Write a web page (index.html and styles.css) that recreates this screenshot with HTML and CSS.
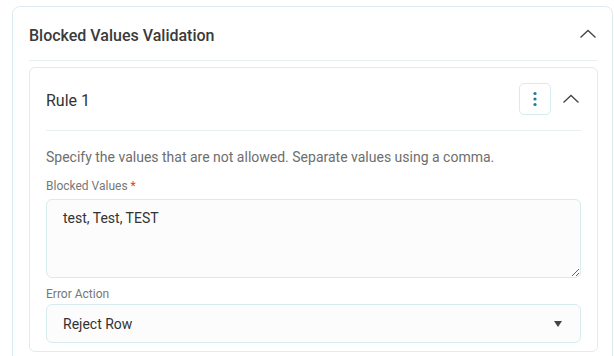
FILE: index.html
```html
<!DOCTYPE html>
<html lang="en">
<head>
    <meta charset="UTF-8">
    <meta name="viewport" content="width=device-width, initial-scale=1.0">
    <title>Blocked Values Validation</title>
    <link rel="stylesheet" href="styles.css">
</head>
<body>
    <div class="page">
        <div class="panel">
            <div class="panel-header">
                <h2>Blocked Values Validation</h2>
                <button class="chevron-btn" aria-label="Collapse">
                    <svg width="18" height="10" viewBox="0 0 18 10"><path d="M1.5 8.5 L9 1.5 L16.5 8.5" fill="none" stroke="#444" stroke-width="1.3"/></svg>
                </button>
            </div>
            <div class="rule-card">
                <div class="rule-header">
                    <h3>Rule 1</h3>
                    <div class="rule-actions">
                        <button class="kebab-btn" aria-label="More">
                            <svg width="4" height="16" viewBox="0 0 4 16"><circle cx="2" cy="2.5" r="1.6" fill="#1c7c99"/><circle cx="2" cy="8" r="1.6" fill="#1c7c99"/><circle cx="2" cy="13.5" r="1.6" fill="#1c7c99"/></svg>
                        </button>
                        <button class="chevron-btn" aria-label="Collapse rule">
                            <svg width="18" height="10" viewBox="0 0 18 10"><path d="M1.5 8.5 L9 1.5 L16.5 8.5" fill="none" stroke="#444" stroke-width="1.3"/></svg>
                        </button>
                    </div>
                </div>
                <div class="rule-body">
                    <p class="hint">Specify the values that are not allowed. Separate values using a comma.</p>
                    <div class="form-group">
                        <label for="blocked">Blocked Values <span class="req">*</span></label>
                        <textarea id="blocked">test, Test, TEST</textarea>
                    </div>
                    <div class="form-group">
                        <label for="action" class="label-tight">Error Action</label>
                        <div class="select-wrap">
                            <select id="action">
                                <option>Reject Row</option>
                                <option>Warn</option>
                            </select>
                        </div>
                    </div>
                </div>
            </div>
        </div>
    </div>
</body>
</html>
```

FILE: styles.css
```css
body {
    margin: 0;
    font-family: Roboto, "Liberation Sans", Arial, sans-serif;
    color: #333;
    background: #fff;
}
.page {
    height: 356px;
    box-sizing: border-box;
    overflow: hidden;
    padding: 6px 0 0 12px;
}
.panel {
    border: 1px solid #dcedef;
    border-radius: 8px;
    padding: 0 14px 0 16px;
    margin-right: 1px;
    height: 380px;
}
.panel-header {
    display: flex;
    align-items: center;
    justify-content: space-between;
    height: 53px;
    border-bottom: 1px solid #e6f1f2;
}
.panel-header h2 {
    margin: 4px 0 0;
    font-size: 16px;
    font-weight: 500;
    color: #3a3a3a;
}
.chevron-btn {
    background: none;
    border: none;
    padding: 0;
    width: 20px;
    height: 20px;
    display: flex;
    align-items: center;
    justify-content: center;
    cursor: pointer;
}
.rule-card {
    margin-top: 6px;
    border: 1px solid #dcedef;
    border-radius: 6px;
    padding: 0 16px 8px 16px;
}
.rule-header {
    display: flex;
    align-items: center;
    justify-content: space-between;
    height: 62px;
    border-bottom: 1px solid #e6f1f2;
}
.rule-header h3 {
    margin: 3px 0 0;
    font-size: 16px;
    font-weight: 400;
    color: #333;
}
.rule-actions {
    display: flex;
    align-items: center;
    gap: 10px;
}
.kebab-btn {
    width: 32px;
    height: 32px;
    border: 1px solid #d6ecef;
    border-radius: 5px;
    background: #fff;
    display: flex;
    align-items: center;
    justify-content: center;
    padding: 0;
    cursor: pointer;
}
.rule-body {
    padding-top: 16px;
}
.hint {
    margin: 0 0 12px;
    font-size: 14px;
    line-height: 20px;
    color: #6e6e6e;
}
.form-group {
    margin-bottom: 9px;
}
.form-group:last-child {
    margin-bottom: 0;
}
label {
    display: block;
    font-size: 12px;
    line-height: 14px;
    color: #777;
    margin-bottom: 6px;
}
.label-tight {
    margin-bottom: 3px;
}
.req {
    color: #e53935;
}
textarea, select {
    width: 100%;
    box-sizing: border-box;
    border: 1px solid #d8ebee;
    border-radius: 6px;
    background: #fcfcfc;
    font-family: inherit;
    font-size: 14px;
    color: #333;
    padding: 8px 16px;
}
textarea {
    height: 79px;
    resize: vertical;
    line-height: 20px;
    display: block;
}
.select-wrap {
    position: relative;
}
select {
    appearance: none;
    -webkit-appearance: none;
    height: 39px;
    padding: 0 16px;
    display: block;
}
.select-wrap::after {
    content: "";
    position: absolute;
    right: 19px;
    top: 17px;
    border-left: 4.5px solid transparent;
    border-right: 4.5px solid transparent;
    border-top: 6px solid #444;
    pointer-events: none;
}
```
